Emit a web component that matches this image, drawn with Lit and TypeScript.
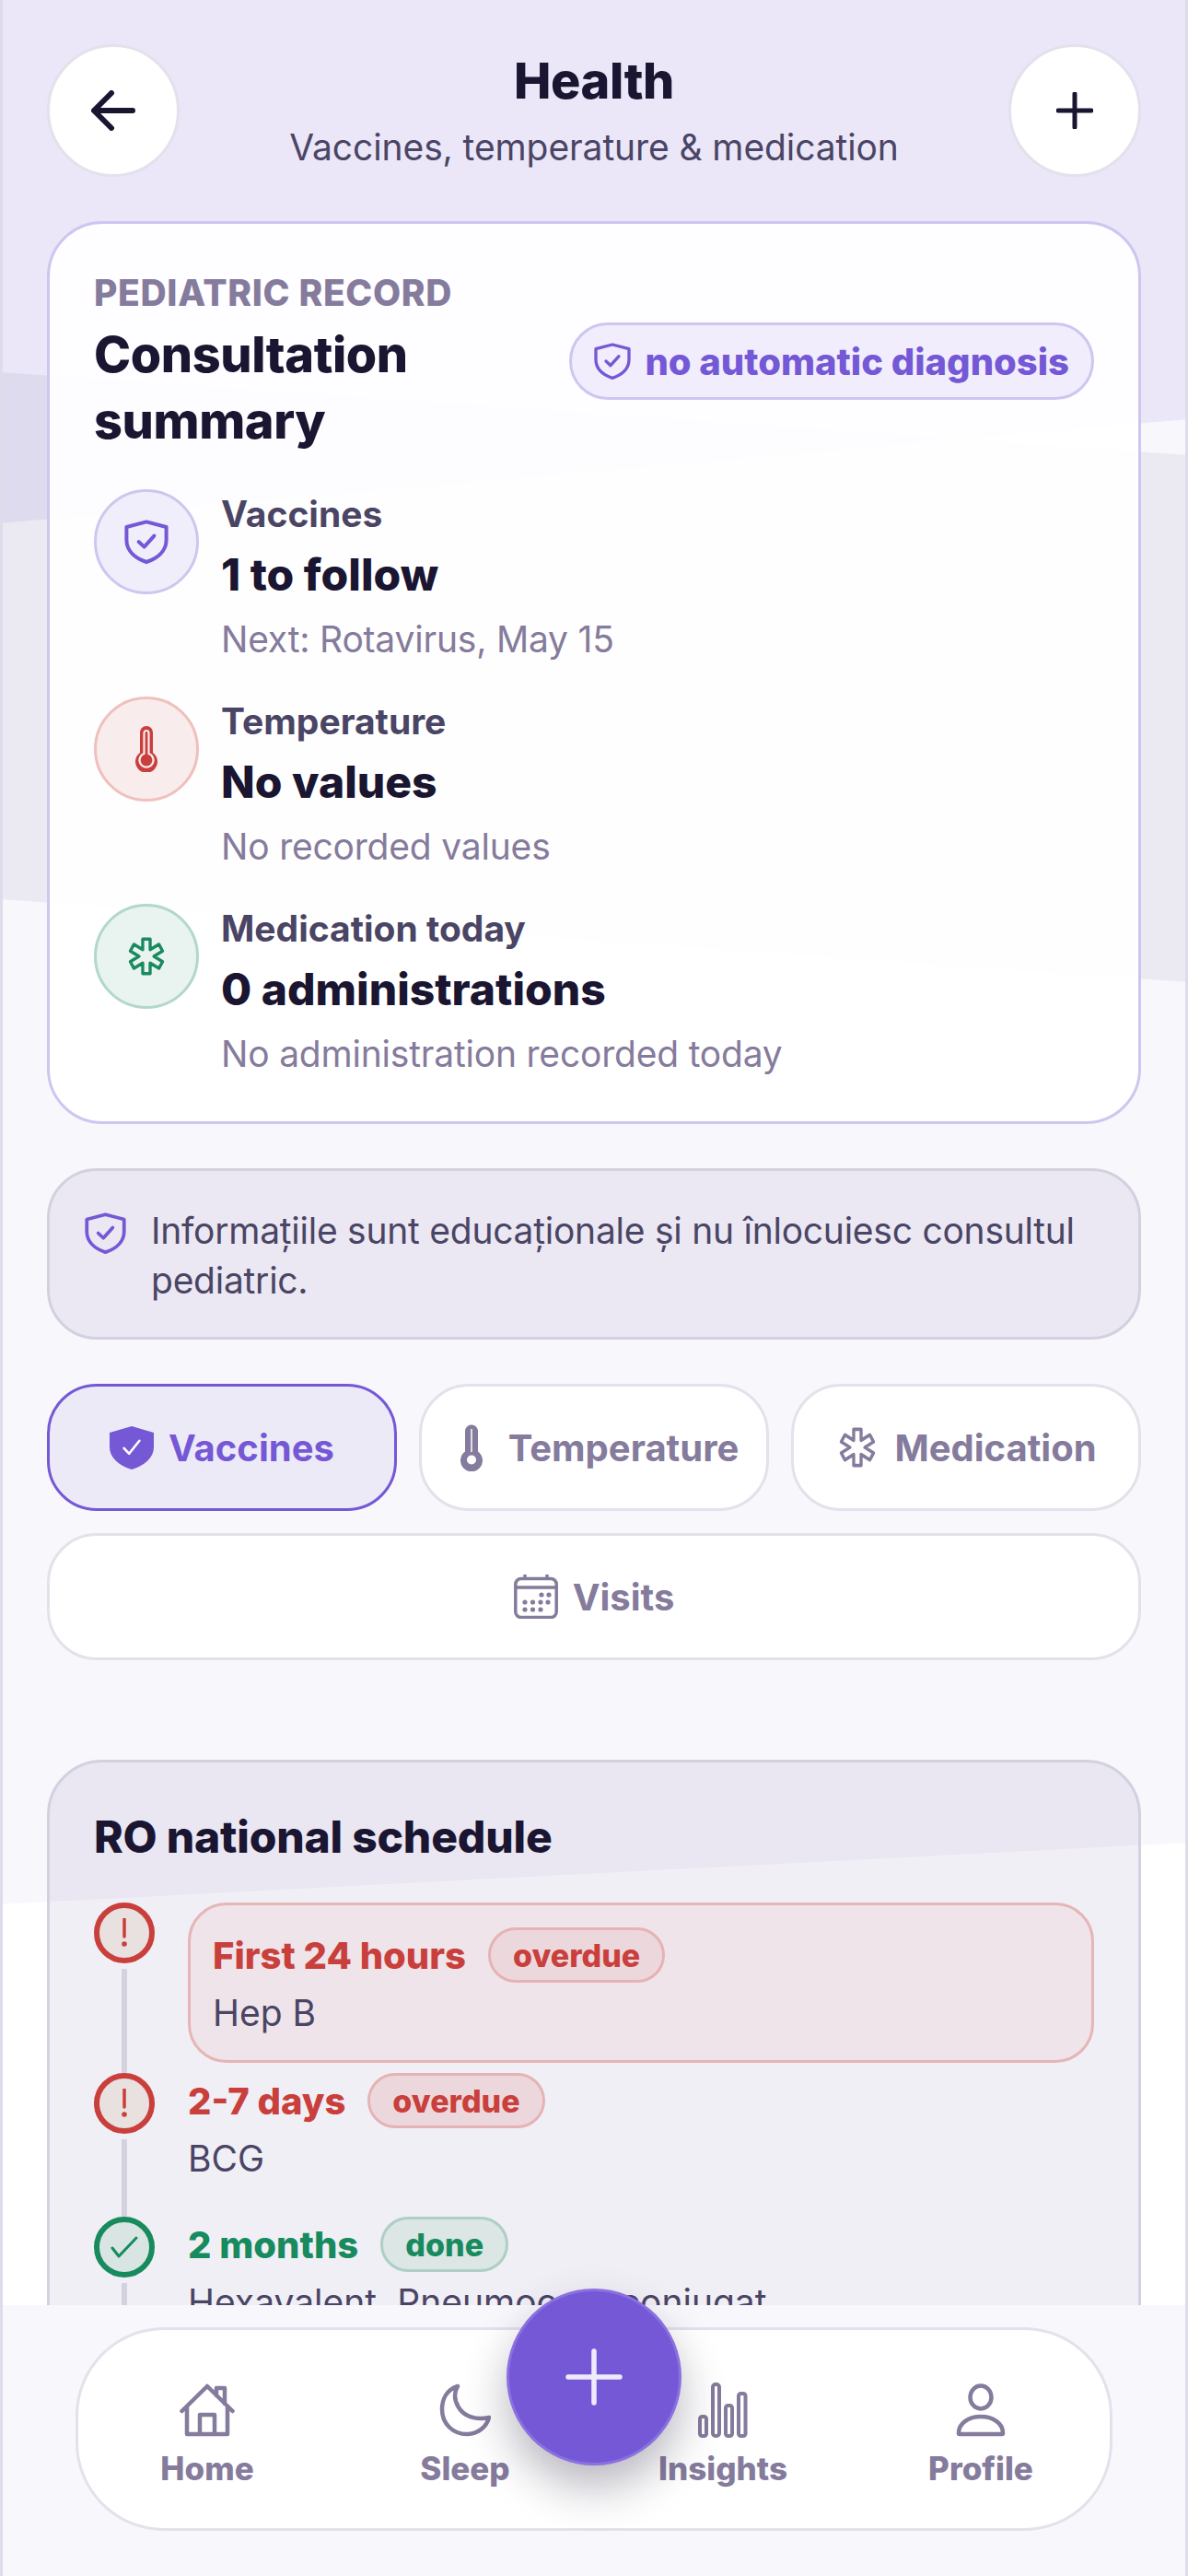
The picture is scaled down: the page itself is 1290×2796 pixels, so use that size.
import {LitElement, html, css, svg} from "lit";
import {customElement} from "lit/decorators.js";

const DARK = "#1a1530";
const MUTED = "#857b9c";
const PURPLE = "#7558d6";
const RED = "#c93f3b";
const GREEN = "#178a5e";

function shield(size: number, color: string) {
    return html`<svg width=${size} height=${size} viewBox="0 0 24 24" fill="none" stroke=${color} stroke-width="2" stroke-linecap="round" stroke-linejoin="round">
        <path d="M12 1.2 22.8 4v7c0 6-4.800 10-10.800 12C6 21 1.200 17 1.200 11V4Z" />
        <path d="m7.800 12 3 2.800 5.400-6" />
    </svg>`;
}

function shieldFilled(size: number, color: string) {
    return html`<svg width=${size} height=${size} viewBox="0 0 24 24" fill="none">
        <path d="M12 .5 24 4v8c0 5.600-5 9.800-12 12C5 21.800 0 17.600 0 12V4Z" fill=${color} />
        <path d="m7.800 12.400 2.800 3 5.600-7" stroke="#fff" stroke-width="1.300" stroke-linecap="round" stroke-linejoin="round" />
    </svg>`;
}

// bulb and tube share one silhouette, the light channel goes on top of it
function thermometer(width: number, height: number, color: string, inner: string, filled: boolean) {
    return html`<svg width=${width} height=${height} viewBox="0 0 24 50" fill="none">
        <path d="M5 29V7a7 7 0 0 1 14 0v22a12 12 0 1 1-14 0Z" fill=${color} />
        ${filled
            ? svg`<path d="M12 5v24" stroke=${inner} stroke-width="1.500" stroke-linecap="round" /><circle cx="12" cy="38" r="5" fill=${inner} />`
            : svg`<path d="M9.500 30V7.500a2.500 2.500 0 0 1 5 0V30a7.500 7.500 0 1 1-5 0Z" stroke=${inner} stroke-width="2.200" /><circle cx="12" cy="38" r="4.800" fill=${color} />`}
    </svg>`;
}

// outline of a six armed star of life
function asteriskPath(armLength: number, halfWidth: number) {
    const parts: string[] = [];
    const rot = (x: number, y: number, deg: number) => {
        const a = (deg * Math.PI) / 180;
        return `${(x * Math.cos(a) - y * Math.sin(a)).toFixed(2)} ${(x * Math.sin(a) + y * Math.cos(a)).toFixed(2)}`;
    };
    for (let i = 0; i < 6; i++) {
        const deg = i * 60;
        parts.push(rot(-halfWidth, -armLength, deg), rot(halfWidth, -armLength, deg), rot(0, -halfWidth * 2, deg + 30));
    }
    return "M" + parts.join("L") + "Z";
}

function asterisk(width: number, height: number, color: string) {
    return html`<svg width=${width} height=${height} viewBox="-24 -24 48 48" preserveAspectRatio="none" fill="none">
        <path d=${asteriskPath(20.500, 4.600)} stroke=${color} stroke-width="3.800" stroke-linejoin="round" />
    </svg>`;
}

function calendar(size: number, color: string) {
    const dots = [
        [30, 22], [38, 22],
        [12, 30], [20.500, 30], [29, 30], [37, 30],
        [12, 38], [20.500, 38], [29, 38],
    ];
    return html`<svg width=${size} height=${size} viewBox="0 0 48 48" fill="none" stroke=${color} stroke-width="3.500">
        <rect x="1.800" y="4.500" width="44.400" height="42" rx="6" />
        <path d="M2 14h44M12 0v5M36 0v5" />
        ${dots.map(([x, y]) => svg`<circle cx=${x} cy=${y} r="2.600" fill=${color} stroke="none" />`)}
    </svg>`;
}

const stats = [
    {kind: "purple", label: "Vaccines", value: "1 to follow", sub: "Next: Rotavirus, May 15", icon: () => shield(48, PURPLE)},
    {kind: "red", label: "Temperature", value: "No values", sub: "No recorded values", icon: () => thermometer(24, 50, RED, "#f8ecec", false)},
    {kind: "green", label: "Medication today", value: "0 administrations", sub: "No administration recorded today", icon: () => asterisk(42, 44, GREEN)},
];

const schedule = [
    {state: "overdue", title: "First 24 hours", body: "Hep B", current: true},
    {state: "overdue", title: "2-7 days", body: "BCG", current: false},
    {state: "done", title: "2 months", body: "Hexavalent, Pneumococ. conjugat", current: false},
];

@customElement("app-root")
class AppRoot extends LitElement {
    static styles = css`
        :host {
            --dark: #1a1530;
            --body: #4a4565;
            --muted: #857b9c;
            --purple: #7558d6;
            --red: #c93f3b;
            --green: #178a5e;
            display: flex;
            flex-direction: column;
            box-sizing: border-box;
            position: relative;
            width: 1290px;
            height: 2796px;
            overflow: hidden;
            border-left: 3px solid #dedcea;
            border-right: 3px solid #dedcea;
            background: #f8f7fc;
            font-family: Inter, "Noto Sans", sans-serif;
            color: var(--dark);
        }

        .backdrop {
            position: absolute;
            left: -3px;
            top: 0;
        }

        .scroll {
            position: relative;
            flex: 1;
            min-height: 0;
            overflow: hidden;
            padding: 48px 48px 0;
            display: flex;
            flex-direction: column;
        }

        header {
            display: flex;
            justify-content: space-between;
            align-items: flex-start;
            margin-bottom: 48px;
            flex: none;
        }

        .round {
            width: 144px;
            height: 144px;
            box-sizing: border-box;
            border-radius: 50%;
            background: #fff;
            border: 3px solid #e3e1ec;
            display: flex;
            align-items: center;
            justify-content: center;
        }

        .heading {
            text-align: center;
            padding-top: 4px;
        }

        h1 {
            margin: 0 0 9px;
            font-size: 54px;
            line-height: 72px;
            font-weight: 800;
            letter-spacing: -0.4px;
        }

        .heading p {
            margin: 0;
            font-size: 39px;
            line-height: 54px;
            letter-spacing: -0.1px;
            color: var(--body);
        }

        .summary {
            flex: none;
            box-sizing: border-box;
            background: rgba(255, 255, 255, 0.92);
            border: 3px solid #cfc6f0;
            border-radius: 60px;
            padding: 48px 48px 46px;
        }

        .summary-top {
            display: flex;
            align-items: center;
            justify-content: space-between;
            margin-bottom: 38px;
        }

        .eyebrow {
            font-size: 39px;
            line-height: 54px;
            font-weight: 800;
            letter-spacing: 0.65px;
            color: var(--muted);
            margin-bottom: 4px;
        }

        h2 {
            margin: 0;
            font-size: 54px;
            line-height: 72px;
            font-weight: 800;
            letter-spacing: -0.4px;
        }

        .pill {
            flex: none;
            box-sizing: border-box;
            height: 84px;
            display: flex;
            align-items: center;
            gap: 15px;
            padding: 0 24px;
            border-radius: 42px;
            background: #f1edfc;
            border: 3px solid #cfc6f0;
            color: var(--purple);
            font-size: 40px;
            font-weight: 800;
        }

        .stats {
            display: flex;
            flex-direction: column;
            gap: 35px;
        }

        .stat {
            display: flex;
            align-items: flex-start;
            gap: 24px;
        }

        .chip {
            flex: none;
            width: 114px;
            height: 114px;
            box-sizing: border-box;
            border-radius: 50%;
            border: 3px solid;
            display: flex;
            align-items: center;
            justify-content: center;
        }

        .chip.purple {
            background: #f1eefb;
            border-color: #cfc6f0;
        }

        .chip.red {
            background: #f8ecec;
            border-color: #efc0bd;
        }

        .chip.green {
            background: #e9f3ef;
            border-color: #b2d8c9;
        }

        .stat-label {
            font-size: 39px;
            line-height: 54px;
            font-weight: 700;
            color: var(--body);
        }

        .stat-value {
            margin-top: 6px;
            font-size: 48px;
            line-height: 66px;
            font-weight: 800;
        }

        .stat-sub {
            margin-top: 10px;
            font-size: 39px;
            line-height: 54px;
            letter-spacing: -0.2px;
            color: var(--muted);
        }

        .note {
            flex: none;
            margin-top: 48px;
            box-sizing: border-box;
            display: flex;
            align-items: flex-start;
            gap: 27px;
            padding: 38px 36px 34px 38px;
            border-radius: 54px;
            background: rgba(67, 42, 130, 0.07);
            border: 3px solid #d3d1df;
            font-size: 39px;
            line-height: 54px;
            letter-spacing: -0.25px;
            color: var(--body);
        }

        .note svg {
            flex: none;
            margin-top: 7px;
        }

        .tabs {
            flex: none;
            margin-top: 48px;
            display: grid;
            grid-template-columns: repeat(3, 1fr);
            gap: 24px;
        }

        .tab {
            box-sizing: border-box;
            height: 138px;
            display: flex;
            align-items: center;
            justify-content: center;
            gap: 16px;
            border-radius: 54px;
            background: #fff;
            border: 3px solid #e3e2ea;
            color: var(--muted);
            font-size: 40px;
            font-weight: 700;
        }

        .tab-icon {
            flex: none;
            width: 48px;
            display: flex;
            justify-content: center;
        }

        .tab.active {
            background: #edeaf8;
            border-color: var(--purple);
            color: var(--purple);
        }

        .tab.wide {
            grid-column: 1 / -1;
        }

        .panel {
            flex: none;
            margin-top: 108px;
            box-sizing: border-box;
            padding: 48px;
            border-radius: 60px;
            background: rgba(67, 42, 130, 0.075);
            border: 3px solid #d3d1df;
        }

        .panel h3 {
            margin: 0 0 38px;
            font-size: 48px;
            line-height: 66px;
            font-weight: 800;
            letter-spacing: -0.2px;
        }

        .row {
            display: flex;
            align-items: stretch;
            gap: 36px;
        }

        .rail {
            flex: none;
            width: 66px;
            display: flex;
            flex-direction: column;
            align-items: center;
        }

        .dot {
            flex: none;
            width: 66px;
            height: 66px;
            box-sizing: border-box;
            border-radius: 50%;
            border: 6px solid;
            display: flex;
            align-items: center;
            justify-content: center;
        }

        .dot.overdue {
            border-color: var(--red);
            background: #e9e0e0;
        }

        .dot.done {
            border-color: var(--green);
            background: #d9e5e2;
        }

        .line {
            flex: 1;
            width: 6px;
            margin-top: 6px;
            background: #d4d2df;
        }

        .content {
            flex: 1;
            min-width: 0;
            padding-bottom: 36px;
        }

        .row.current .content {
            padding-bottom: 11px;
        }

        .box {
            box-sizing: border-box;
        }

        .row.current .box {
            padding: 24px;
            border-radius: 42px;
            background: rgba(201, 63, 59, 0.06);
            border: 3px solid #e6b5b6;
        }

        .title-line {
            display: flex;
            align-items: center;
            gap: 24px;
        }

        .title {
            font-size: 40px;
            font-weight: 800;
        }

        .title.overdue {
            color: var(--red);
        }

        .title.done {
            color: var(--green);
        }

        .tag {
            box-sizing: border-box;
            height: 60px;
            display: flex;
            align-items: center;
            padding: 0 24px;
            border-radius: 30px;
            border: 3px solid;
            font-size: 34px;
            font-weight: 800;
        }

        .tag.overdue {
            color: var(--red);
            background: #ecd8dc;
            border-color: #e5b3b5;
        }

        .tag.done {
            color: var(--green);
            background: #dbe6e5;
            border-color: #aecfc3;
        }

        .body {
            margin-top: 6px;
            font-size: 39px;
            line-height: 54px;
            color: var(--body);
        }

        footer {
            position: relative;
            flex: none;
            background: #f8f7fc;
            padding: 24px 79px 49px;
        }

        nav {
            box-sizing: border-box;
            height: 221px;
            display: grid;
            grid-template-columns: repeat(4, 1fr);
            background: #fff;
            border: 3px solid #e3e2ea;
            border-radius: 96px;
            padding-top: 57px;
        }

        .nav-item {
            display: flex;
            flex-direction: column;
            align-items: center;
            color: var(--muted);
            font-size: 35px;
            line-height: 48px;
            font-weight: 800;
        }

        .nav-icon {
            height: 60px;
            margin-bottom: 9px;
            display: flex;
            align-items: center;
        }

        .fab {
            position: absolute;
            left: 547px;
            top: -18px;
            box-sizing: border-box;
            width: 190px;
            height: 192px;
            border-radius: 50%;
            background: var(--purple);
            border: 3px solid #8a70e0;
            box-shadow: 0 24px 48px rgba(26, 21, 48, 0.3);
            display: flex;
            align-items: center;
            justify-content: center;
        }
    `;

    override render() {
        return html`
            <svg class="backdrop" width="1290" height="2796" viewBox="0 0 1290 2796">
                <rect width="1290" height="2796" fill="#f8f7fc" />
                <polygon points="0,2067 1290,2000 1290,2796 0,2796" fill="#ffffff" />
                <polygon points="0,0 1290,0 1290,455 0,568" fill="#ebe7f8" />
                <polygon points="0,404 1290,494 1290,1066 0,976" fill="#4b4580" fill-opacity="0.07" />
            </svg>
            <div class="scroll">
                <header>
                    <div class="round">
                        <svg width="48" height="44" viewBox="0 0 48 44" fill="none" stroke=${DARK} stroke-width="6" stroke-linecap="round" stroke-linejoin="round">
                            <path d="M45 22H4M22 3 3 22l19 19" />
                        </svg>
                    </div>
                    <div class="heading">
                        <h1>Health</h1>
                        <p>Vaccines, temperature &amp; medication</p>
                    </div>
                    <div class="round">
                        <svg width="40" height="40" viewBox="0 0 40 40" fill="none" stroke=${DARK} stroke-width="5" stroke-linecap="round">
                            <path d="M20 2v36M2 20h36" />
                        </svg>
                    </div>
                </header>

                <section class="summary">
                    <div class="summary-top">
                        <div>
                            <div class="eyebrow">PEDIATRIC RECORD</div>
                            <h2>Consultation summary</h2>
                        </div>
                        <div class="pill">${shield(40, PURPLE)}no automatic diagnosis</div>
                    </div>
                    <div class="stats">
                        ${stats.map((s) => html`
                            <div class="stat">
                                <div class="chip ${s.kind}">${s.icon()}</div>
                                <div>
                                    <div class="stat-label">${s.label}</div>
                                    <div class="stat-value">${s.value}</div>
                                    <div class="stat-sub">${s.sub}</div>
                                </div>
                            </div>
                        `)}
                    </div>
                </section>

                <div class="note">
                    ${shield(45, PURPLE)}
                    <span>Informațiile sunt educaționale și nu înlocuiesc consultul pediatric.</span>
                </div>

                <div class="tabs">
                    <div class="tab active"><span class="tab-icon">${shieldFilled(48, PURPLE)}</span>Vaccines</div>
                    <div class="tab"><span class="tab-icon">${thermometer(24, 51, MUTED, "#fff", true)}</span>Temperature</div>
                    <div class="tab"><span class="tab-icon">${asterisk(42, 46, MUTED)}</span>Medication</div>
                    <div class="tab wide"><span class="tab-icon">${calendar(48, MUTED)}</span>Visits</div>
                </div>

                <section class="panel">
                    <h3>RO national schedule</h3>
                    ${schedule.map((item) => html`
                        <div class="row ${item.current ? "current" : ""}">
                            <div class="rail">
                                <div class="dot ${item.state}">
                                    ${item.state === "overdue"
                                        ? html`<svg width="8" height="32" viewBox="0 0 8 32" fill="none"><path d="M4 1v19" stroke=${RED} stroke-width="3.500" stroke-linecap="round" /><circle cx="4" cy="28" r="2.800" fill=${RED} /></svg>`
                                        : html`<svg width="30" height="24" viewBox="0 0 30 24" fill="none"><path d="m2 13 7 9L28 2" stroke=${GREEN} stroke-width="3" stroke-linecap="round" stroke-linejoin="round" /></svg>`}
                                </div>
                                <div class="line"></div>
                            </div>
                            <div class="content">
                                <div class="box">
                                    <div class="title-line">
                                        <span class="title ${item.state}">${item.title}</span>
                                        <span class="tag ${item.state}">${item.state}</span>
                                    </div>
                                    <div class="body">${item.body}</div>
                                </div>
                            </div>
                        </div>
                    `)}
                </section>
            </div>

            <footer>
                <nav>
                    <div class="nav-item">
                        <div class="nav-icon">
                            <svg width="60" height="58" viewBox="0 0 60 58" fill="none" stroke=${MUTED} stroke-width="4.500" stroke-linecap="round" stroke-linejoin="round">
                                <path d="M2.500 30 30 3l27.500 27M8 25v30h44V25M22 55V34h16v21M40 13V5h9v17" />
                            </svg>
                        </div>
                        Home
                    </div>
                    <div class="nav-item">
                        <div class="nav-icon">
                            <svg width="56" height="58" viewBox="0 0 56 58" fill="none" stroke=${MUTED} stroke-width="4.500" stroke-linecap="round" stroke-linejoin="round">
                                <path d="M20 3C8 7 3 17 3 28c0 16 12 27 27 27 11 0 21-7 24-18-14 3-27-1-33-11-5-8-5-16-1-23Z" />
                            </svg>
                        </div>
                        Sleep
                    </div>
                    <div class="nav-item">
                        <div class="nav-icon">
                            <svg width="54" height="60" viewBox="0 0 54 60" fill="none" stroke=${MUTED} stroke-width="4">
                                <rect x="2" y="37" width="7" height="21" rx="2.500" />
                                <rect x="16" y="2" width="7" height="56" rx="3" />
                                <rect x="30" y="25" width="7" height="33" rx="2.500" />
                                <rect x="44" y="12" width="7.500" height="46" rx="2.500" />
                            </svg>
                        </div>
                        Insights
                    </div>
                    <div class="nav-item">
                        <div class="nav-icon">
                            <svg width="54" height="58" viewBox="0 0 54 58" fill="none" stroke=${MUTED} stroke-width="4.500" stroke-linejoin="round">
                                <ellipse cx="27" cy="15" rx="11.500" ry="12.500" />
                                <path d="M3 54c0-11 11-18 24-18s24 7 24 18c0 .800-.500 1-1 1H4c-.500 0-1-.200-1-1Z" />
                            </svg>
                        </div>
                        Profile
                    </div>
                </nav>
                <div class="fab">
                    <svg width="62" height="62" viewBox="0 0 62 62" fill="none" stroke="#efeafc" stroke-width="5.500" stroke-linecap="round">
                        <path d="M31 3v56M3 31h56" />
                    </svg>
                </div>
            </footer>
        `;
    }
}

declare global {
    interface HTMLElementTagNameMap {
        "app-root": AppRoot;
    }
}
